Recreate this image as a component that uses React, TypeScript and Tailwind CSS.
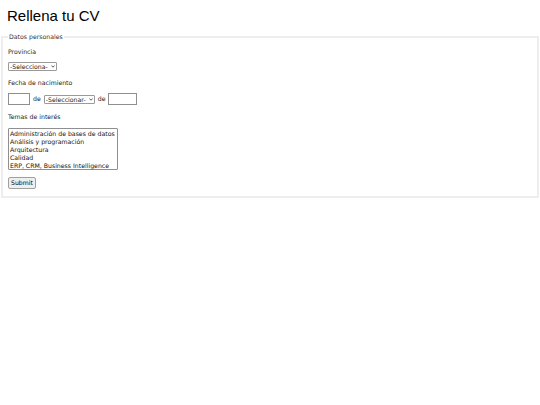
import React from 'react';

const temas = [
  'Administración de bases de datos',
  'Análisis y programación',
  'Arquitectura',
  'Calidad',
  'ERP, CRM, Business Intelligence',
];

// Small dropdown with a tiny chevron drawn on top of a plain select
function MiniSelect({ options }: { options: string[] }) {
  return (
    <span className="relative inline-block">
      <select className="appearance-none block h-[9px] pl-[1px] pr-[8px] border border-[#9a9a9a] rounded-[1px] bg-white text-[6.2px] leading-[7px] text-[#222]">
        {options.map((o) => (
          <option key={o}>{o}</option>
        ))}
      </select>
      <svg
        className="absolute right-[2px] top-[3px] w-[4px] h-[3px] pointer-events-none"
        viewBox="0 0 4 3"
        fill="none"
        stroke="#333"
        strokeWidth="0.8"
      >
        <path d="M0.4 0.5 L2 2.2 L3.6 0.5" />
      </svg>
    </span>
  );
}

export default function App() {
  return (
    <div className="min-h-[405px] bg-white text-[#222] font-['DejaVu_Sans',Verdana,sans-serif]">
      <h1 className="pt-[8px] pl-[7px] text-[15px] leading-[15px] font-['Liberation_Sans',Arial,sans-serif] text-black">
        Rellena tu CV
      </h1>

      <form className="mt-[10px] px-[1px]">
        <fieldset className="border-2 border-[#eee] px-[5px] pb-[7px] text-[6.2px] leading-[8px]">
          <legend className="px-[1px] text-[#333]">Datos personales</legend>

          {/* Provincia */}
          <p className="mt-[7px]">Provincia</p>
          <div className="mt-[6px]">
            <MiniSelect options={['-Selecciona-', 'Madrid', 'Barcelona', 'Valencia']} />
          </div>

          {/* Fecha de nacimiento */}
          <p className="mt-[8px]">Fecha de nacimiento</p>
          <div className="mt-[6px] flex items-center">
            <input type="text" className="w-[22px] h-[12px] border border-[#8f8f8f] bg-white" />
            <span className="mx-[3px]">de</span>
            <MiniSelect options={['-Seleccionar-', 'enero', 'febrero', 'marzo']} />
            <span className="mx-[3px]">de</span>
            <input type="text" className="w-[29px] h-[12px] border border-[#8f8f8f] bg-white" />
          </div>

          {/* Temas de interés: multi-select list */}
          <p className="mt-[8px]">Temas de interés</p>
          <div
            role="listbox"
            aria-multiselectable="true"
            className="mt-[7px] w-[110px] h-[42px] pt-[1px] border border-[#8f8f8f] rounded-[1px] bg-white text-[#111]"
          >
            {temas.map((t) => (
              <div key={t} role="option" className="h-[8px] px-[1px] leading-[8px] whitespace-nowrap">
                {t}
              </div>
            ))}
          </div>

          <button
            type="button"
            className="mt-[7px] flex items-center h-[12px] px-[2px] border border-[#a0a0a0] rounded-[2px] bg-[#efefef] text-[6.2px] leading-none text-black"
          >
            Submit
          </button>
        </fieldset>
      </form>
    </div>
  );
}
